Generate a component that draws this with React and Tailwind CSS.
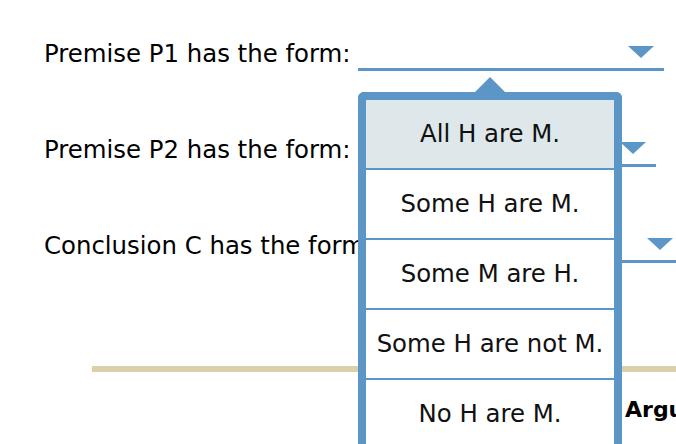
import React from 'react';

const OPTIONS = ['All H are M.', 'Some H are M.', 'Some M are H.', 'Some H are not M.', 'No H are M.'];

const Caret = () => (
  <svg width="26" height="12" viewBox="0 0 26 12" className="block">
    <path d="M0 0 H26 L13 12 Z" fill="#5b96c6" />
  </svg>
);

const Select = ({ width }) => (
  <div
    className="h-[40px] flex items-end justify-end pr-[10px] pb-[10px] border-b-[3px] border-[#5b96c6] shrink-0"
    style={{ width }}
  >
    <Caret />
  </div>
);

const Row = ({ label, width }) => (
  <div className="h-[40px] flex items-end gap-[7px] whitespace-nowrap">
    <span className="text-[24.4px] leading-[30px] mb-[2px] text-black">{label}</span>
    <Select width={width} />
  </div>
);

export default function App() {
  return (
    <div
      className="relative w-[676px] h-[444px] overflow-hidden bg-white"
      style={{ fontFamily: '"DejaVu Sans", Verdana, sans-serif' }}
    >
      <div className="pt-[31px] pl-[44px] flex flex-col gap-[56px]">
        <Row label="Premise P1 has the form:" width={306} />
        <Row label="Premise P2 has the form:" width={298} />
        <Row label="Conclusion C has the form:" width={303} />
      </div>

      <div className="mt-[103px] ml-[92px] h-[6px] bg-[#dbd0a8]" />
      <div className="mt-[24px] pl-[625px] whitespace-nowrap text-[22px] leading-[28px] font-bold text-black">
        Argument form
      </div>

      {/* dropdown menu */}
      <div className="absolute left-[358px] top-[77px] w-[264px]">
        <div className="flex justify-center">
          <svg width="30" height="15" viewBox="0 0 30 15" className="block">
            <path d="M0 15 L15 0 L30 15 Z" fill="#5b96c6" />
          </svg>
        </div>
        <div className="border-[8px] border-b-0 border-[#5b96c6] rounded-t-[6px] bg-white">
          {OPTIONS.map((o, i) => (
            <div
              key={o}
              className={
                i === 0
                  ? 'h-[68px] flex items-center justify-center text-[24.4px] text-[#111] whitespace-nowrap bg-[#dee7ea]'
                  : 'h-[70px] flex items-center justify-center text-[24.4px] text-[#111] whitespace-nowrap border-t-2 border-[#5b96c6]'
              }
            >
              {o}
            </div>
          ))}
        </div>
      </div>
    </div>
  );
}
